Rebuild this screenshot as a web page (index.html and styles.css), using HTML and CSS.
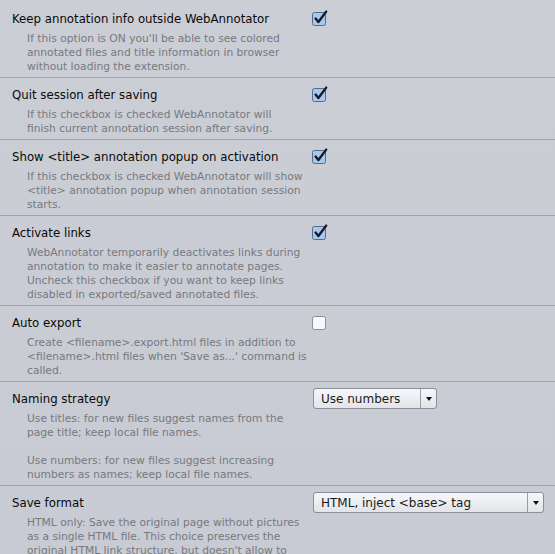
FILE: index.html
```html
<!DOCTYPE html>
<html>
<head>
<meta charset="utf-8">
<link rel="stylesheet" href="styles.css">
</head>
<body>
<div class="prefs">
  <div class="row">
    <div class="text">
      <div class="title">Keep annotation info outside WebAnnotator</div>
      <div class="desc">If this option is ON you'll be able to see colored<br>annotated files and title information in browser<br>without loading the extension.</div>
    </div>
    <div class="ctrl"><span class="cb checked"><svg viewBox="0 0 18 18" width="18" height="18"><rect x="0.5" y="3.5" width="13" height="13" rx="2" class="box-on"/><path d="M3.6 9.6 L6.4 13 L14.2 2.6" class="tick"/></svg></span></div>
  </div>
  <div class="row">
    <div class="text">
      <div class="title">Quit session after saving</div>
      <div class="desc">If this checkbox is checked WebAnnotator will<br>finish current annotation session after saving.</div>
    </div>
    <div class="ctrl"><span class="cb checked"><svg viewBox="0 0 18 18" width="18" height="18"><rect x="0.5" y="3.5" width="13" height="13" rx="2" class="box-on"/><path d="M3.6 9.6 L6.4 13 L14.2 2.6" class="tick"/></svg></span></div>
  </div>
  <div class="row">
    <div class="text">
      <div class="title">Show &lt;title&gt; annotation popup on activation</div>
      <div class="desc">If this checkbox is checked WebAnnotator will show<br>&lt;title&gt; annotation popup when annotation session<br>starts.</div>
    </div>
    <div class="ctrl"><span class="cb checked"><svg viewBox="0 0 18 18" width="18" height="18"><rect x="0.5" y="3.5" width="13" height="13" rx="2" class="box-on"/><path d="M3.6 9.6 L6.4 13 L14.2 2.6" class="tick"/></svg></span></div>
  </div>
  <div class="row">
    <div class="text">
      <div class="title">Activate links</div>
      <div class="desc">WebAnnotator temporarily deactivates links during<br>annotation to make it easier to annotate pages.<br>Uncheck this checkbox if you want to keep links<br>disabled in exported/saved annotated files.</div>
    </div>
    <div class="ctrl"><span class="cb checked"><svg viewBox="0 0 18 18" width="18" height="18"><rect x="0.5" y="3.5" width="13" height="13" rx="2" class="box-on"/><path d="M3.6 9.6 L6.4 13 L14.2 2.6" class="tick"/></svg></span></div>
  </div>
  <div class="row">
    <div class="text">
      <div class="title">Auto export</div>
      <div class="desc">Create &lt;filename&gt;.export.html files in addition to<br>&lt;filename&gt;.html files when 'Save as...' command is<br>called.</div>
    </div>
    <div class="ctrl"><span class="cb"><svg viewBox="0 0 18 18" width="18" height="18"><rect x="0.5" y="3.5" width="13" height="13" rx="2" class="box-off"/></svg></span></div>
  </div>
  <div class="row">
    <div class="text">
      <div class="title">Naming strategy</div>
      <div class="desc">Use titles: for new files suggest names from the<br>page title; keep local file names.<br><br>Use numbers: for new files suggest increasing<br>numbers as names; keep local file names.</div>
    </div>
    <div class="ctrl"><div class="select sel-short"><span class="sel-label">Use numbers</span><span class="sel-arrow"></span></div></div>
  </div>
  <div class="row">
    <div class="text">
      <div class="title">Save format</div>
      <div class="desc">HTML only: Save the original page without pictures<br>as a single HTML file. This choice preserves the<br>original HTML link structure, but doesn't allow to</div>
    </div>
    <div class="ctrl"><div class="select sel-long"><span class="sel-label">HTML, inject &lt;base&gt; tag</span><span class="sel-arrow"></span></div></div>
  </div>
</div>
</body>
</html>
```

FILE: styles.css
```css
html, body {
  margin: 0;
  padding: 0;
  height: 554px;
  overflow: hidden;
}
body {
  background: linear-gradient(#cbced5, #c8cbd3);
  font-family: "DejaVu Sans", sans-serif;
  padding-top: 2px;
  box-sizing: border-box;
}
.row {
  display: grid;
  grid-template-columns: 312px 1fr;
  padding: 8px 0 3px;
  border-bottom: 1px solid #a2a5ac;
}
.title {
  padding-left: 12px;
  font-size: 11.75px;
  line-height: 18px;
  color: #0a0a0a;
  white-space: nowrap;
}
.desc {
  padding-left: 27px;
  margin-top: 4px;
  font-size: 10.7px;
  line-height: 14px;
  color: #77797e;
  white-space: nowrap;
}
.ctrl {
  position: relative;
}
.cb {
  display: block;
  width: 18px;
  height: 18px;
  margin-top: -1px;
}
.cb svg { display: block; }
.box-on {
  fill: #a9c8ef;
  stroke: #59698a;
  stroke-width: 1;
}
.box-off {
  fill: #f7f8fa;
  stroke: #8d9097;
  stroke-width: 1;
}
.tick {
  fill: none;
  stroke: #141c2a;
  stroke-width: 2.4;
  stroke-linecap: round;
  stroke-linejoin: round;
}
.select {
  display: flex;
  align-items: stretch;
  height: 21px;
  margin-top: -2px;
  margin-left: 1px;
  box-sizing: border-box;
  border: 1px solid #8c8f96;
  border-radius: 3px;
  background: linear-gradient(#f6f7f9, #e2e4e9);
  font-size: 12px;
  color: #1a1a1a;
}
.sel-short { width: 124px; }
.sel-long { width: 231px; }
.sel-label {
  flex: 1;
  padding-left: 7px;
  line-height: 20px;
  white-space: nowrap;
}
.sel-arrow {
  width: 15px;
  border-left: 1px solid #9a9da4;
  position: relative;
}
.sel-arrow::after {
  content: "";
  position: absolute;
  left: 5px;
  top: 8px;
  border-left: 3px solid transparent;
  border-right: 3px solid transparent;
  border-top: 4px solid #111;
}
```
